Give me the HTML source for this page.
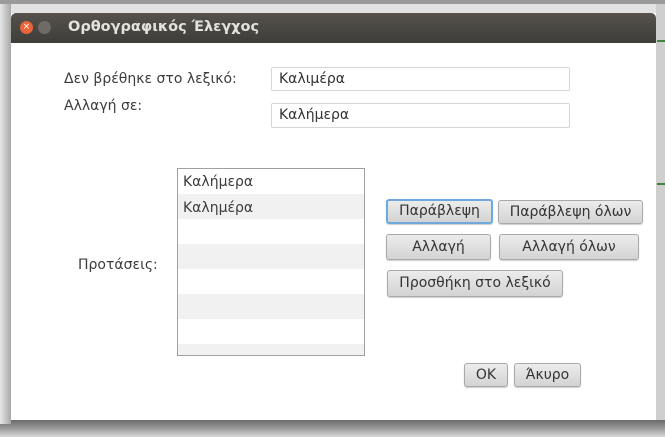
<!DOCTYPE html><html><head><style>
body{margin:0;width:665px;height:437px;overflow:hidden;background:#e2e2e2;font-family:"DejaVu Sans","Liberation Sans",sans-serif;position:relative}
.a{position:absolute}
.t{font-size:14px;color:#3c3c3c;white-space:nowrap}
.in{position:absolute;background:#fff;border:1px solid #d6d6d6;border-radius:2px;font-size:14px;color:#333;padding-left:7px;box-sizing:border-box;white-space:nowrap}
.b{position:absolute;box-sizing:border-box;border:1px solid #a9a9a9;border-radius:3px;background:linear-gradient(#ececec,#d3d3d3);font-size:14px;color:#333;text-align:center;box-shadow:0 1px 1px rgba(0,0,0,.2);white-space:nowrap}
</style></head><body>
<div class="a" style="left:0;top:0;width:665px;height:4px;background:#9a9a9a"></div>
<div class="a" style="left:656px;top:4px;width:9px;height:420px;background:#cfcfcf"></div>
<div class="a" style="left:657px;top:40px;width:8px;height:2px;background:#3a8a3a"></div>
<div class="a" style="left:657px;top:183px;width:8px;height:2px;background:#3a8a3a"></div>
<div class="a" style="left:0;top:420px;width:665px;height:17px;background:linear-gradient(#6a6a6a,#9a9a9a 50%,#d8d8d8)"></div>
<div class="a" style="left:0;top:4px;width:11px;height:420px;background:linear-gradient(90deg,#e6e6e6,#a8a8a8)"></div>
<div class="a" style="left:11px;top:13px;width:645px;height:407px;background:#fff"></div>
<div class="a" style="left:11px;top:13px;width:645px;height:30px;background:linear-gradient(#55524d,#3f3d39);border-radius:5px 5px 0 0"></div>
<div class="a" style="left:20px;top:21px;width:13px;height:13px;border-radius:50%;background:#e8643a;color:#fff;font-size:9px;text-align:center;line-height:13px">×</div>
<div class="a" style="left:38px;top:21px;width:13px;height:13px;border-radius:50%;background:#6e6b66"></div>
<div class="a" style="left:68px;top:19px;font-size:14.5px;font-weight:bold;color:#e4e2dd;white-space:nowrap">Ορθογραφικός Έλεγχος</div>
<div class="a t" style="left:64px;top:71px">Δεν βρέθηκε στο λεξικό:</div>
<div class="in" style="left:271px;top:67px;width:299px;height:24px;line-height:22px">Καλιμέρα</div>
<div class="a t" style="left:64px;top:98px">Αλλαγή σε:</div>
<div class="in" style="left:271px;top:103px;width:299px;height:25px;line-height:23px">Καλήμερα</div>
<div class="a t" style="left:78px;top:257px">Προτάσεις:</div>
<div class="a" style="left:177px;top:168px;width:188px;height:188px;border:1px solid #a0a0a0;box-sizing:border-box;background:repeating-linear-gradient(#fff 0 25px,#f1f1f1 25px 50px);overflow:hidden">
<div class="t" style="position:absolute;left:5px;top:5px">Καλήμερα</div>
<div class="t" style="position:absolute;left:5px;top:31px">Καλημέρα</div></div>
<div class="b" style="left:386px;top:199px;width:107px;height:25px;line-height:21px;border:2px solid #6fa8dc">Παράβλεψη</div>
<div class="b" style="left:498px;top:200px;width:145px;height:24px;line-height:22px">Παράβλεψη όλων</div>
<div class="b" style="left:386px;top:234px;width:105px;height:26px;line-height:24px">Αλλαγή</div>
<div class="b" style="left:499px;top:234px;width:140px;height:26px;line-height:24px">Αλλαγή όλων</div>
<div class="b" style="left:387px;top:270px;width:176px;height:27px;line-height:25px">Προσθήκη στο λεξικό</div>
<div class="b" style="left:464px;top:363px;width:44px;height:24px;line-height:22px">OK</div>
<div class="b" style="left:514px;top:363px;width:67px;height:24px;line-height:22px">Άκυρο</div>
</body></html>
